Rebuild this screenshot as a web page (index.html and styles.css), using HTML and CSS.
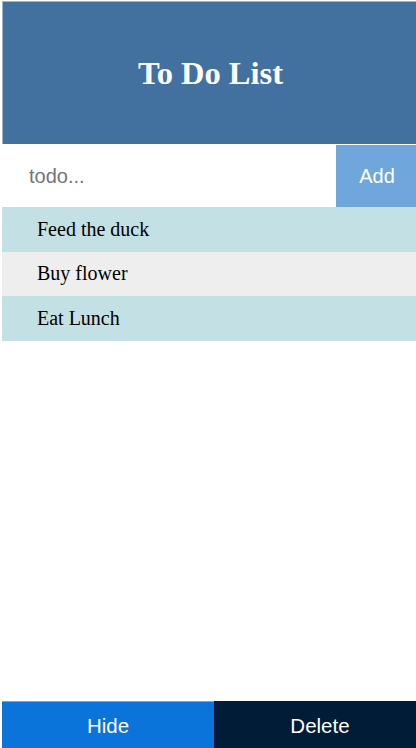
FILE: index.html
```html
<!DOCTYPE html>
<html>
<head>
<meta charset="utf-8">
<link rel="stylesheet" href="styles.css">
</head>
<body>
<div class="app">
  <header class="header"><h1 class="title">To Do List</h1></header>
  <form class="entry">
    <input class="entry-input" type="text" placeholder="todo...">
    <button class="entry-add" type="button">Add</button>
  </form>
  <ul class="list">
    <li class="item item-blue">Feed the duck</li>
    <li class="item item-grey">Buy flower</li>
    <li class="item item-blue">Eat Lunch</li>
  </ul>
</div>
<footer class="footer">
  <button class="foot-btn foot-hide" type="button">Hide</button>
  <button class="foot-btn foot-delete" type="button">Delete</button>
</footer>
</body>
</html>
```
FILE: styles.css
```css
html, body {
  margin: 0;
  padding: 0;
  height: 100%;
  overflow: hidden;
  background: #ffffff;
}
body {
  position: relative;
  font-family: "Liberation Serif", serif;
}
.app {
  margin: 1px 0 0 2px;
  width: 414px;
}
.header {
  height: 143px;
  background: #4271a0;
  border-top: 1px solid #9fb5cc;
  border-left: 1px solid #9fb5cc;
  box-sizing: border-box;
  display: flex;
  align-items: center;
  justify-content: center;
}
.title {
  margin: 0;
  color: #ffffff;
  font-family: "Liberation Serif", serif;
  font-weight: bold;
  font-size: 32.5px;
  line-height: 1;
  padding-left: 2px;
}
.entry {
  display: flex;
  height: 62px;
  margin: 1px 0 0 0;
}
.entry-input {
  flex: 1;
  border: none;
  outline: none;
  padding: 0 0 0 27px;
  font-family: "Liberation Sans", Arial, sans-serif;
  font-size: 20px;
  color: #333;
  background: #ffffff;
  min-width: 0;
}
.entry-input::placeholder {
  color: #757575;
}
.entry-add {
  width: 80px;
  border: none;
  background: #6fa7dc;
  color: #ffffff;
  font-family: "Liberation Sans", Arial, sans-serif;
  font-size: 20px;
  padding: 0 0 0 2px;
}
.list {
  list-style: none;
  margin: 0;
  padding: 0;
}
.item {
  height: 44.5px;
  display: flex;
  align-items: center;
  padding-left: 35px;
  font-size: 20px;
  color: #000000;
}
.item-blue {
  background: #c3e0e5;
}
.item-grey {
  background: #eeeeee;
}
.footer {
  position: absolute;
  left: 2px;
  bottom: 0;
  height: 47px;
  display: grid;
  grid-template-columns: 212px 212px;
}
.foot-btn {
  border: none;
  margin: 0;
  padding: 3px 0 0 0;
  color: #ffffff;
  font-family: "Liberation Sans", Arial, sans-serif;
  font-size: 20.5px;
}
.foot-hide {
  background: #0a74da;
  box-shadow: inset 0 1px 0 #6aa8e6;
}
.foot-delete {
  background: #001c36;
}
```
